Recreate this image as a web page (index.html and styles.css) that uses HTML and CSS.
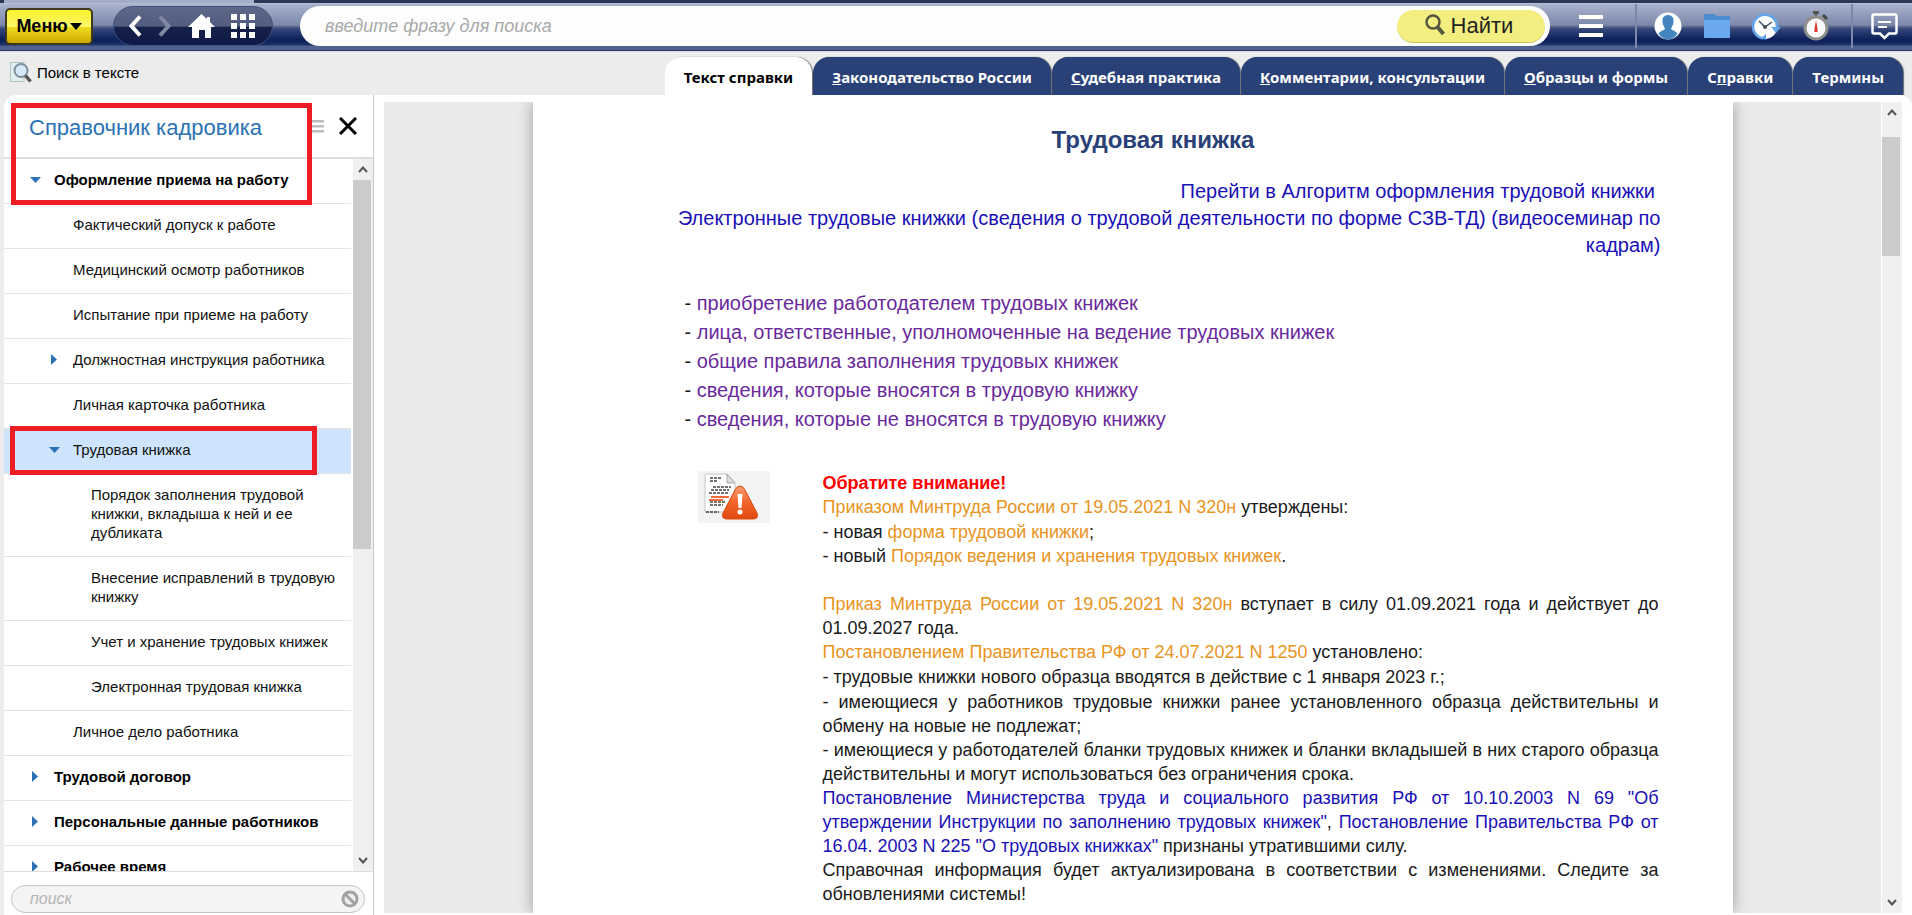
FILE: index.html
```html
<!DOCTYPE html>
<html lang="ru">
<head>
<meta charset="utf-8">
<title>Трудовая книжка</title>
<link rel="stylesheet" href="styles.css">
</head>
<body>
<header class="topbar">
  <div class="topstrip"><span class="topstrip-active"></span></div>
  <div class="bar">
    <button class="menu-btn">Меню<svg width="12" height="7" viewBox="0 0 12 7"><path d="M0 0h12L6 7z"/></svg></button>
    <nav class="nav-pill" aria-label="Навигация">
      <button class="icon-btn" aria-label="Назад"><svg width="14" height="22" viewBox="0 0 14 22" fill="none" stroke="#fff" stroke-width="4"><path d="M12 1.500 3.500 11 12 20.500"/></svg></button>
      <button class="icon-btn" aria-label="Вперед"><svg width="14" height="22" viewBox="0 0 14 22" fill="none" stroke="#7f88a3" stroke-width="4"><path d="M2 1.500 10.500 11 2 20.500"/></svg></button>
      <button class="icon-btn" aria-label="Домой"><svg width="27" height="24" viewBox="0 0 27 24" fill="#fff"><path d="M13.500 0 19 5V3h3v5l5 5h-4v11h-6v-8h-6v8H4V13H0z"/></svg></button>
      <button class="icon-btn" aria-label="Разделы"><svg width="24" height="24" viewBox="0 0 24 24" fill="#fff"><path d="M0 0h6v6H0zM9 0h6v6H9zM18 0h6v6h-6zM0 9h6v6H0zM9 9h6v6H9zM18 9h6v6h-6zM0 18h6v6H0zM9 18h6v6H9zM18 18h6v6h-6z"/></svg></button>
    </nav>
    <form class="search">
      <input class="search-input" type="text" placeholder="введите фразу для поиска" aria-label="Поиск">
      <button class="search-btn" type="button"><svg width="21" height="23" viewBox="0 0 21 23" fill="none" stroke="#555640"><circle cx="8" cy="8" r="6.500" stroke-width="2.500"/><path d="m12.500 13 6 7" stroke-width="4"/></svg>Найти</button>
    </form>
    <button class="icon-btn lines-btn" aria-label="Список"><svg width="24" height="22" viewBox="0 0 24 22" fill="#fff"><path d="M0 0h24v4H0zM0 9h24v4H0zM0 18h24v4H0z"/></svg></button>
    <div class="tools">
      <button class="icon-btn" aria-label="Профиль"><svg width="28" height="28" viewBox="0 0 28 28"><circle cx="14" cy="14" r="13.500" fill="#fff"/><path d="M14 3c4 0 6 3 5.500 7-.3 3-1.500 5-2.500 6.500.5 2 5 2.500 6.500 5C21 25.500 17.500 27.500 14 27.500S7 25.500 4.500 21.500c1.500-2.500 6-3 6.500-5C10 15 8.800 13 8.500 10 8 6 10 3 14 3z" fill="#4384c1"/></svg></button>
      <button class="icon-btn" aria-label="Папки"><svg width="26" height="24" viewBox="0 0 26 24"><path d="M0 1q0-1 1-1h9q1 0 1.500 1L12 2h13q1 0 1 1v6H0z" fill="#4b8dcf"/><path d="M0 6h26v17q0 1-1 1H1q-1 0-1-1z" fill="#6aa9ee"/></svg></button>
      <button class="icon-btn" aria-label="История"><svg width="29" height="27" viewBox="0 0 29 27"><circle cx="13" cy="13.500" r="12.500" fill="#fff"/><path d="M11 25.500A12 12 0 1 1 25 14" fill="none" stroke="#62a4ea" stroke-width="2.500"/><path d="M19 14h10l-5 6z" fill="#62a4ea"/><path d="M14 21v6l-5-2z" fill="#62a4ea"/><path d="m7 8 6 6 7-5" fill="none" stroke="#41505c" stroke-width="1.500"/><circle cx="13" cy="14" r="2" fill="#41505c"/></svg></button>
      <button class="icon-btn" aria-label="Таймер"><svg width="26" height="30" viewBox="0 0 26 30"><path d="M10 0h6v3h-2v4h-2V3h-2z" fill="#555"/><path d="m20 4 4 4" stroke="#444" stroke-width="3"/><circle cx="13" cy="17" r="11" fill="#fff" stroke="#8f8f8b" stroke-width="3"/><circle cx="13" cy="17" r="7.500" fill="none" stroke="#cfd3d8" stroke-dasharray="1 3"/><path d="m13 9 1.500 9v3h-3v-3z" fill="#d9352f"/></svg></button>
    </div>
    <div class="tools-last">
      <button class="icon-btn" aria-label="Сообщения"><svg width="27" height="27" viewBox="0 0 27 27" fill="none" stroke="#fff" stroke-width="2.500"><path d="M3 1.500h21q1.500 0 1.500 1.500v16q0 1.500-1.500 1.500h-6L13.500 25 9 20.500H3Q1.500 20.500 1.500 19V3Q1.500 1.500 3 1.500z"/><path d="M7 9h13M7 14h9" stroke-width="2"/></svg></button>
    </div>
  </div>
</header>

<div class="subbar">
  <button class="find-text"><svg width="22" height="21" viewBox="0 0 22 21"><path d="M.5.500H14v19H.5z" fill="#e3efee" stroke="#aac6c4"/><circle cx="11" cy="8.500" r="6.500" fill="#d5e7f8" stroke="#7d8f9c" stroke-width="2"/><path d="m15.500 13.500 5 6" stroke="#555" stroke-width="3.500"/></svg>Поиск в тексте</button>
  <nav class="tabs">
    <a class="tab tab-active" href="#">Текст справки</a>
    <a class="tab" href="#"><u>З</u>аконодательство России</a>
    <a class="tab" href="#"><u>С</u>удебная практика</a>
    <a class="tab" href="#"><u>К</u>омментарии, консультации</a>
    <a class="tab" href="#"><u>О</u>бразцы и формы</a>
    <a class="tab" href="#">С<u>п</u>равки</a>
    <a class="tab" href="#">Термины</a>
  </nav>
</div>

<div class="content">
  <aside class="sidebar">
    <div class="side-head">
      <h2 class="side-title">Справочник кадровика</h2>
      <button class="icon-btn" aria-label="Список"><svg width="14" height="13" viewBox="0 0 14 13" fill="#bdbdbd"><path d="M0 0h14v2.500H0zM0 5h14v2.500H0zM0 10h14v2.500H0z"/></svg></button>
      <button class="icon-btn" aria-label="Закрыть"><svg width="18" height="18" viewBox="0 0 18 18" fill="none" stroke="#000" stroke-width="3"><path d="m1 1 16 16M17 1 1 17"/></svg></button>
    </div>
    <div class="side-body">
      <ul class="tree">
        <li class="row lvl1 open"><a href="#">Оформление приема на работу</a></li>
        <li class="row lvl2"><a href="#">Фактический допуск к работе</a></li>
        <li class="row lvl2"><a href="#">Медицинский осмотр работников</a></li>
        <li class="row lvl2"><a href="#">Испытание при приеме на работу</a></li>
        <li class="row lvl2 closed"><a href="#">Должностная инструкция работника</a></li>
        <li class="row lvl2"><a href="#">Личная карточка работника</a></li>
        <li class="row lvl2 open selected"><a href="#">Трудовая книжка</a></li>
        <li class="row lvl3"><a href="#">Порядок заполнения трудовой книжки, вкладыша к ней и ее дубликата</a></li>
        <li class="row lvl3"><a href="#">Внесение исправлений в трудовую книжку</a></li>
        <li class="row lvl3"><a href="#">Учет и хранение трудовых книжек</a></li>
        <li class="row lvl3"><a href="#">Электронная трудовая книжка</a></li>
        <li class="row lvl2"><a href="#">Личное дело работника</a></li>
        <li class="row lvl1 closed"><a href="#">Трудовой договор</a></li>
        <li class="row lvl1 closed"><a href="#">Персональные данные работников</a></li>
        <li class="row lvl1 closed"><a href="#">Рабочее время</a></li>
      </ul>
      <div class="scroll">
        <svg class="scroll-arrow" viewBox="0 0 10 8"><path d="M1 6.500 5 2l4 4.500"/></svg>
        <div class="scroll-track"><div class="thumb thumb-side"></div></div>
        <svg class="scroll-arrow" viewBox="0 0 10 8"><path d="M1 1.500 5 6l4-4.500"/></svg>
      </div>
    </div>
    <div class="side-foot">
      <div class="side-search">
        <input class="side-input" type="text" placeholder="поиск" aria-label="Поиск в справочнике">
        <button class="icon-btn" aria-label="Очистить"><svg width="18" height="18" viewBox="0 0 18 18" fill="#eee" stroke="#a2a2a2" stroke-width="3"><circle cx="9" cy="9" r="7"/><path d="m4 4 10 10"/></svg></button>
      </div>
    </div>
    <div class="mark mark-head"></div>
    <div class="mark mark-row"></div>
  </aside>

  <main class="main">
    <div class="canvas">
      <article class="page">
        <h1 class="title">Трудовая книжка</h1>
        <div class="refs">
          <p><a href="#">Перейти в Алгоритм оформления трудовой книжки</a>&nbsp;</p>
          <p><a href="#">Электронные трудовые книжки (сведения о трудовой деятельности по форме СЗВ-ТД) (видеосеминар по кадрам)</a></p>
        </div>
        <ul class="topics">
          <li>- <a href="#">приобретение работодателем трудовых книжек</a></li>
          <li>- <a href="#">лица, ответственные, уполномоченные на ведение трудовых книжек</a></li>
          <li>- <a href="#">общие правила заполнения трудовых книжек</a></li>
          <li>- <a href="#">сведения, которые вносятся в трудовую книжку</a></li>
          <li>- <a href="#">сведения, которые не вносятся в трудовую книжку</a></li>
        </ul>
        <section class="notice">
          <svg class="notice-icon" width="72" height="52" viewBox="0 0 72 52">
            <defs><linearGradient id="w" x1="0" y1="0" x2="0" y2="1"><stop offset="0" stop-color="#f9a072"/><stop offset=".5" stop-color="#f2642a"/><stop offset="1" stop-color="#e04a10"/></linearGradient></defs>
            <path d="M0 0h72v52H0z" fill="#f4f4f4"/>
            <path d="M7 3h22l8 9v29H7z" fill="#fff" stroke="#c4c4c4"/>
            <path d="M29 3v9h8z" fill="#ddd" stroke="#aaa"/>
            <path d="M12 7h11M12 10h7M15 16h18M13 19h18M11 22h20M12 31h15M12 34h13M8 41h13" stroke="#444" stroke-width="1.500" stroke-dasharray="3 1"/>
            <path d="M13 26h18M11 29h14" stroke="#f26a3c" stroke-width="2"/>
            <path d="M42 15q3 0 5 4l12 23q2 6-4 6H29q-6 0-4-6l12-23q2-4 5-4z" fill="url(#w)" stroke="#d9480f"/>
            <path d="M39.500 23h5l-1 14h-3z" fill="#fff"/><circle cx="42" cy="41" r="2.500" fill="#fff"/>
          </svg>
          <div class="notice-text">
            <p class="warn">Обратите внимание!</p>
            <p><a href="#">Приказом Минтруда России от 19.05.2021 N 320н</a> утверждены:</p>
            <p class="next">- новая <a href="#">форма трудовой книжки</a>;</p>
            <p>- новый <a href="#">Порядок ведения и хранения трудовых книжек</a>.</p>
            <p class="after-gap"><a href="#">Приказ Минтруда России от 19.05.2021 N 320н</a> вступает в силу 01.09.2021 года и действует до 01.09.2027 года.</p>
            <p><a href="#">Постановлением Правительства РФ от 24.07.2021 N 1250</a> установлено:</p>
            <p class="next">- трудовые книжки нового образца вводятся в действие с 1 января 2023 г.;</p>
            <p class="next">- имеющиеся у работников трудовые книжки ранее установленного образца действительны и обмену на новые не подлежат;</p>
            <p>- имеющиеся у работодателей бланки трудовых книжек и бланки вкладышей в них старого образца действительны и могут использоваться без ограничения срока.</p>
            <p><a class="blue" href="#">Постановление Министерства труда и социального развития РФ от 10.10.2003 N 69 "Об утверждении Инструкции по заполнению трудовых книжек"</a>, <a class="blue" href="#">Постановление Правительства РФ от 16.04. 2003 N 225 "О трудовых книжках"</a> признаны утратившими силу.</p>
            <p>Справочная информация будет актуализирована в соответствии с изменениями. Следите за обновлениями системы!</p>
          </div>
        </section>
      </article>
    </div>
    <div class="scroll scroll-main">
      <svg class="scroll-arrow" viewBox="0 0 10 8"><path d="M1 6.500 5 2l4 4.500"/></svg>
      <div class="scroll-track"><div class="thumb thumb-main"></div></div>
      <svg class="scroll-arrow" viewBox="0 0 10 8"><path d="M1 1.500 5 6l4-4.500"/></svg>
    </div>
  </main>
</div>
</body>
</html>
```
FILE: styles.css
```css
* { box-sizing: border-box; }

body {
  margin: 0;
  height: 100vh;
  display: flex;
  flex-direction: column;
  overflow: hidden;
  background: #ececec;
  color: #1a1a1a;
  font-family: "Liberation Sans", Arial, sans-serif;
  font-size: 15px;
}

h1, h2, p, ul { margin: 0; padding: 0; }
ul { list-style: none; }
a { color: inherit; text-decoration: none; }
button, input { font-family: inherit; }

.icon-btn {
  display: flex;
  align-items: center;
  padding: 0;
  border: 0;
  background: none;
}

/* Top bar */
.topstrip { height: 3px; padding-left: 4px; background: #2a3656; }
.topstrip-active { display: block; width: 250px; height: 100%; background: #a3adc9; }

.bar {
  display: flex;
  align-items: center;
  height: 48px;
  padding: 0 14px 2px 5px;
  border-top: 1px solid #b4bdd6;
  border-bottom: 1px solid #2b3b68;
  background: linear-gradient(#a9b3ce 0, #7c88aa 46%, #5b688f 49%, #35477a 54%, #0a1f58 78%, #1c2f66 88%, #4f618f 92%, #4f618f 100%);
}

.menu-btn {
  display: flex;
  align-items: center;
  justify-content: center;
  gap: 2px;
  width: 88px;
  height: 37px;
  padding: 0;
  border: 2px solid #3d3a22;
  border-radius: 5px;
  background: linear-gradient(#fbf32a 0, #fbf66a 50%, #efdc20 52%, #cfa800 100%);
  font-size: 18px;
  font-weight: bold;
}

.nav-pill {
  display: flex;
  align-items: center;
  gap: 16px;
  height: 40px;
  margin-left: 20px;
  padding: 0 17px 0 14px;
  border: 1px solid #3f5080;
  border-radius: 20px;
  background: linear-gradient(#5d6787 0, #525d80 50%, #16214a 54%, #0d1a45 100%);
}

.search {
  display: flex;
  align-items: center;
  flex: 1;
  height: 40px;
  margin-left: 27px;
  padding: 0 5px 0 25px;
  border-radius: 20px;
  background: #fdfdfd;
}
.search-input {
  flex: 1;
  padding: 0;
  border: 0;
  outline: 0;
  background: none;
  font-size: 18px;
  font-style: italic;
}
.search-input::placeholder { color: #a9a9a9; }
.search-btn {
  display: flex;
  align-items: center;
  justify-content: center;
  gap: 5px;
  width: 148px;
  height: 33px;
  padding: 0 4px 0 0;
  border: 0;
  border-bottom: 1px solid #c9c257;
  border-radius: 17px;
  background: #f3ee80;
  color: #222;
  font-size: 22px;
}
.lines-btn { margin: 0 32px 0 29px; }

.tools, .tools-last {
  display: flex;
  align-items: center;
  align-self: stretch;
  border-left: 2px solid #7b88ac;
}
.tools { gap: 22px; padding: 0 22px 0 17px; }
.tools-last { padding-left: 18px; }

/* Tab row */
.subbar {
  display: flex;
  align-items: flex-end;
  justify-content: space-between;
  height: 44px;
  padding: 0 9px 0 10px;
  border-top: 1px solid #d6dcea;
}
.find-text {
  display: flex;
  align-items: center;
  align-self: center;
  gap: 5px;
  padding: 0 0 2px;
  border: 0;
  background: none;
  font-size: 15px;
}
.tabs { display: flex; gap: 1px; }
.tab {
  height: 38px;
  padding: 0 19px;
  border-radius: 16px 16px 0 0;
  background: #2a4178;
  box-shadow: 1px 0 1px #666;
  color: #fff;
  font: bold 15px/41px "Noto Sans", Tahoma, sans-serif;
}
.tab-active { background: #fff; color: #000; }

/* Columns */
.content {
  display: flex;
  flex: 1;
  min-height: 0;
  padding-left: 4px;
}

.sidebar {
  position: relative;
  display: flex;
  flex-direction: column;
  width: 370px;
  border-right: 1px solid #c8c8c8;
  border-radius: 12px 0 0 0;
  background: #fff;
}
.side-head {
  display: flex;
  align-items: center;
  gap: 15px;
  height: 64px;
  padding: 0 16px 0 25px;
  border-bottom: 2px solid #dedede;
}
.side-title {
  flex: 1;
  margin-top: 4px;
  color: #2a72b5;
  font-size: 22px;
  font-weight: normal;
}
.side-body { display: flex; flex: 1; min-height: 0; gap: 2px; }
.tree { flex: 1; overflow: hidden; }
.row {
  position: relative;
  padding: 11px 10px 14px;
  border-bottom: 1px solid #e4e4e4;
  color: #111;
  line-height: 19px;
}
.lvl1 { padding-left: 50px; font-weight: bold; color: #000; }
.lvl2 { padding-left: 69px; }
.lvl3 { padding-left: 87px; }
.selected { background: #cde4fc; }
.open::before, .closed::before {
  content: "";
  position: absolute;
  top: 18px;
  left: 26px;
  width: 11px;
  height: 6px;
  background: #2a72b5;
  clip-path: polygon(0 0, 100% 0, 50% 100%);
}
.closed::before {
  top: 15px;
  left: 28px;
  width: 6px;
  height: 11px;
  clip-path: polygon(0 0, 100% 50%, 0 100%);
}
.lvl2.open::before { left: 45px; }
.lvl2.closed::before { left: 47px; }

.side-foot { padding: 13px 8px 2px 7px; border-top: 1px solid #dedede; }
.side-search {
  display: flex;
  align-items: center;
  height: 28px;
  padding: 0 5px 0 18px;
  border: 1px solid #c4c4c4;
  border-radius: 14px;
  background: #f4f4f4;
}
.side-input {
  flex: 1;
  min-width: 0;
  padding: 0;
  border: 0;
  outline: 0;
  background: none;
  font-size: 16px;
  font-style: italic;
}
.side-input::placeholder { color: #b4b4b4; }

/* Red callouts drawn over the tree */
.mark { position: absolute; border: 5px solid #ee1c24; }
.mark-head { top: 8px; left: 7px; width: 301px; height: 102px; }
.mark-row { top: 331px; left: 6px; width: 307px; height: 49px; }

/* Scrollbars */
.scroll {
  display: flex;
  flex-direction: column;
  align-items: center;
  width: 20px;
  background: #f0f0f0;
}
.scroll-arrow {
  width: 10px;
  height: 21px;
  fill: none;
  stroke: #555;
  stroke-width: 2;
}
.scroll-track { flex: 1; width: 100%; }
.thumb { width: 18px; background: #cbcbcb; }
.thumb-side { height: 55%; }
.thumb-main { height: 119px; margin-top: 14px; }

/* Document */
.main {
  display: flex;
  flex: 1;
  min-width: 0;
  padding: 7px 10px 2px;
  border-radius: 0 12px 0 0;
  background: #fff;
}
.canvas {
  display: flex;
  justify-content: center;
  flex: 1;
  min-width: 0;
  margin-right: 1px;
  overflow: hidden;
  background: #eaeaea;
}
.page {
  flex: 0 1 1200px;
  padding: 24px 72px 0 113px;
  background: #fff;
  box-shadow: 0 0 14px #9c9c9c;
}
.title {
  color: #2a4178;
  font-size: 24px;
  line-height: 28px;
  text-align: center;
}
.refs {
  margin-top: 24px;
  color: #1a10b8;
  font-size: 20px;
  line-height: 27px;
  text-align: right;
}
.topics {
  margin: 30px 0 0 39px;
  font-size: 20px;
  line-height: 29px;
}
.topics a { color: #6a2a9c; }

.notice {
  display: flex;
  gap: 53px;
  margin: 37px 2px 0 52px;
}
.notice-icon { flex: none; }
.notice-text {
  font-size: 18px;
  line-height: 24px;
  text-align: justify;
}
.notice-text a { color: #e8941e; }
.notice-text .blue { color: #1a10b8; }
.warn { color: #f00; font-weight: bold; }
.next { margin-top: 1px; }
.after-gap { margin-top: 24px; }
```
